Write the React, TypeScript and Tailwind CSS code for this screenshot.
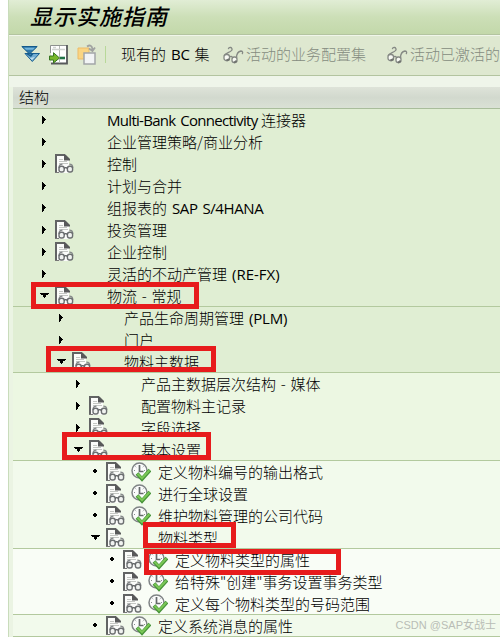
import type { ReactNode } from 'react';
import clsx from 'clsx';

type Row = {
  level: number;
  label: ReactNode;
  marker: 'closed' | 'open' | 'leaf';
  doc?: boolean;
  run?: boolean;
  line?: boolean;
  box?: string;
};

const L = ({ children, className = '' }: { children: string; className?: string }) => (
  <span className={clsx("inline-block [font-family:'Open_Sans','Noto_Sans',sans-serif] text-[15px] leading-[20px] font-normal", className)}>{children}</span>
);

const rows: Row[] = [
  { level: 0, marker: 'closed', label: <><L className="w-[154px] tracking-[-0.7px]">Multi-Bank Connectivity</L>连接器</> },
  { level: 0, marker: 'closed', label: '企业管理策略/商业分析' },
  { level: 0, marker: 'closed', label: '控制', doc: true },
  { level: 0, marker: 'closed', label: '计划与合并' },
  { level: 0, marker: 'closed', label: <>组报表的<L className="ml-[5px] tracking-[-0.4px]">SAP S/4HANA</L></> },
  { level: 0, marker: 'closed', label: '投资管理', doc: true },
  { level: 0, marker: 'closed', label: '企业控制', doc: true },
  { level: 0, marker: 'closed', label: <>灵活的不动产管理<L className="ml-[5px]">(RE-FX)</L></> },
  { level: 0, marker: 'open', label: '物流 - 常规', doc: true, line: true, box: 'left-[18px] top-[-3px] w-[168px] h-[27px]' },
  { level: 1, marker: 'closed', label: <>产品生命周期管理<L className="ml-[5px] tracking-[-0.2px]">(PLM)</L></> },
  { level: 1, marker: 'closed', label: '门户' },
  { level: 1, marker: 'open', label: '物料主数据', doc: true, line: true, box: 'left-[33px] top-[-5px] w-[170px] h-[26px]' },
  { level: 2, marker: 'closed', label: '产品主数据层次结构 - 媒体' },
  { level: 2, marker: 'closed', label: '配置物料主记录', doc: true },
  { level: 2, marker: 'closed', label: '字段选择', doc: true },
  { level: 2, marker: 'open', label: '基本设置', doc: true, line: true, box: 'left-[49px] top-[-7px] w-[149px] h-[28px]' },
  { level: 3, marker: 'leaf', label: '定义物料编号的输出格式', doc: true, run: true },
  { level: 3, marker: 'leaf', label: '进行全球设置', doc: true, run: true },
  { level: 3, marker: 'leaf', label: '维护物料管理的公司代码', doc: true, run: true },
  { level: 3, marker: 'open', label: '物料类型', doc: true, line: true, box: 'left-[130px] top-[-5px] w-[93px] h-[26px]' },
  { level: 4, marker: 'leaf', label: '定义物料类型的属性', doc: true, run: true, box: 'left-[131px] top-0 w-[197px] h-[26px]' },
  { level: 4, marker: 'leaf', label: '给特殊"创建"事务设置事务类型', doc: true, run: true },
  { level: 4, marker: 'leaf', label: '定义每个物料类型的号码范围', doc: true, run: true, line: true },
  { level: 3, marker: 'leaf', label: '定义系统消息的属性', doc: true, run: true, line: true },
];

const indent = ['pl-[29px]', 'pl-[46px]', 'pl-[63px]', 'pl-[80px]', 'pl-[97px]'];
const shade = ['bg-[#e0eed3]', 'bg-[#e0eed3]', 'bg-[#ecf7e2]', 'bg-[#f2faec]', 'bg-[#f9fdf6]'];

function Marker({ kind }: { kind: Row['marker'] }) {
  return (
    <svg width="9" height="22" viewBox="0 0 9 22" shapeRendering="crispEdges" className="overflow-visible">
      {kind === 'closed' && <path d="M0 7h1v8h-1zM1 8h1v6h-1zM2 9h1v3h-1zM3 10h1v1h-1z" />}
      {kind === 'open' && <path d="M-2 8h9v1h-9zM-1 9h7v1h-7zM1 10h3v2h-3zM2 12h1v1h-1z" />}
      {kind === 'leaf' && <path d="M1 8h2v1h1v2h-1v1h-2v-1h-1v-2h1z" />}
    </svg>
  );
}

function DocIcon() {
  return (
    <svg width="19" height="20" viewBox="0 0 19 20" fill="none">
      <path d="M1 1h9l4 4v14H1z" fill="#fbfcfa" />
      <path d="M1 19V1h9" stroke="#626464" strokeWidth="2" />
      <path d="M9 .5h1.5L15 5v1.5H9z" fill="#58595a" />
      <path d="M4 5.5h4M4 7.5h8M4 9.5h9" stroke="#c4c7c3" />
      <path d="M0 18.5h4" stroke="#777" />
      <path d="M4 14c0-3 1-3.8 3.5-3.8M17.8 14c0-3-1-3.8-3.5-3.8" stroke="#85888a" strokeWidth="1.3" />
      <rect x="4" y="12.2" width="5.2" height="5.8" rx="2.2" fill="#f1f3f1" stroke="#6c6f71" strokeWidth="1.4" />
      <rect x="12.4" y="12.2" width="5.2" height="5.8" rx="2.2" fill="#f1f3f1" stroke="#6c6f71" strokeWidth="1.4" />
      <path d="M9 14.5c1-1 2.5-1 3.5 0" stroke="#5d6062" strokeWidth="1.4" />
    </svg>
  );
}

function RunIcon() {
  return (
    <svg width="20" height="20" viewBox="0 0 20 20" fill="none">
      <circle cx="8.5" cy="8.5" r="7.5" fill="#fbfcfc" stroke="#808486" strokeWidth="1.5" />
      <path d="M8.5 3v6.5h4" stroke="#65696b" strokeWidth="1.7" />
      <path d="M3 8.5h1M8.5 14v1M13 8.5h1M4.5 4.5l.7.7M12.5 4.5l-.7.7" stroke="#8a8e90" />
      <path d="M6 11.5l5 5.5 8-9" stroke="#459238" strokeWidth="3.8" />
      <path d="M6.4 11.8l4.6 4.5 7.4-8" stroke="#7ac756" strokeWidth="2" />
    </svg>
  );
}

function ExpandIcon() {
  return (
    <svg width="20" height="20" viewBox="0 0 20 20">
      <path d="M.8 1.5h15.4L8.5 9z" fill="#2f78aa" stroke="#14598b" />
      <path d="M3 2.8h11L12 4.8H5z" fill="#73b5dc" />
      <path d="M4 8.5h14.5L11.3 16.5z" fill="#72add3" stroke="#175d8f" />
      <path d="M3.5 8l4 .2 1.5 1.5 2-1.5h2L10 12z" fill="#175d8f" />
      <path d="M6 10.5l5 4.5 3-3-5 1z" fill="#c0dfef" />
    </svg>
  );
}

function InsertIcon() {
  return (
    <svg width="20" height="21" viewBox="0 0 20 21" fill="none">
      <path d="M2 1h16v19H2z" fill="#fff" />
      <path d="M1.5 9V1.5H18" stroke="#8d918f" />
      <path d="M18 1v18.5H2" stroke="#57595b" strokeWidth="1.8" />
      <path d="M10.5 2v17" stroke="#b5b9b5" />
      <path d="M3 5.5h13M4 3.5h3" stroke="#d0d4d0" strokeWidth="1.6" />
      <path d="M11 14h5" stroke="#227448" strokeWidth="2.6" />
      <path d="M.5 12h4V8.7l6 5.3-6 5V16h-4z" fill="#78b72b" stroke="#377620" />
    </svg>
  );
}

function CopyIcon() {
  return (
    <svg width="20" height="21" viewBox="0 0 20 21" fill="none">
      <path d="M1 4h11v11H1z" fill="#fad582" stroke="#edbb69" />
      <path d="M7 9h11v11H7z" fill="#f2f4f5" stroke="#a3a5a8" strokeWidth="1.5" />
      <path d="M10 2.5c3-2 5-1 5.5 3M12 4.5l3.5 2.5 2.5-3.5" stroke="#a0a2a1" strokeWidth="1.8" />
    </svg>
  );
}

function Glasses() {
  return (
    <svg width="21" height="18" viewBox="0 0 21 18" fill="none" stroke="#858984" strokeWidth="1.3">
      <path d="M1.2 10C2 6.5 7 7 9 4 9.5 1 6 .6 5.3 3.2M13.5 12C13.5 8 15 5.5 18 5c2 0 2 2 1 3" />
      <rect x="1" y="8.5" width="5.5" height="6" rx="2.3" fill="#f8faf4" />
      <rect x="9" y="11" width="5" height="5.5" rx="2.2" fill="#f8faf4" />
      <path d="M6.5 11c1-1 2.5-1 3.5 1" />
      <path d="M3.5 14.5l3-1.3M11 16.8l2.7-2" stroke="#70746f" strokeWidth="2" />
    </svg>
  );
}

function TreeRow({ row }: { row: Row }) {
  return (
    <div
      className={clsx(
        'relative flex h-[22px] items-start',
        indent[row.level],
        shade[row.level],
        row.line && 'border-b border-[#b3c99e]'
      )}
    >
      <div className="w-[13px] shrink-0"><Marker kind={row.marker} /></div>
      <div className="flex w-[52px] shrink-0 gap-[6px] pt-px">
        {row.doc && <DocIcon />}
        {row.run && <RunIcon />}
      </div>
      <span className="whitespace-pre leading-[21px] [word-spacing:1.4px]">{row.label}</span>
      {row.box && <div className={clsx('absolute z-10 border-[5px] border-[#e71b1c]', row.box)} />}
    </div>
  );
}

export default function App() {
  return (
    <div className="relative h-[637px] w-[500px] overflow-hidden bg-white pl-[8px] [font-family:'Noto_Sans_CJK_SC',sans-serif] text-[15px] font-light text-black">
      <div className="h-full border-l border-[#c9dcbb] bg-[#ebf4e3]">
        <header className="h-[35px] border-b border-[#b3c4a0] bg-linear-to-b from-[#e1edd5] via-[#ccdfb7] to-[#c3d8aa] pl-[21px]">
          <h1 className="text-[22px] leading-[30px] font-medium tracking-[1px] italic">显示实施指南</h1>
        </header>
        <div className="flex h-[41px] items-center overflow-hidden border-t border-b border-t-[#f0f6ea] border-b-[#b3c4a0] bg-[#dee8d0] pb-[2px] whitespace-nowrap">
          <div className="ml-[12px] flex shrink-0 items-center gap-[8px]">
            <ExpandIcon />
            <InsertIcon />
            <CopyIcon />
          </div>
          <div className="ml-[8px] h-[17px] w-px shrink-0 bg-[#b8d899]" />
          <span className="ml-[15px] w-[102px] shrink-0">现有的<L className="mr-[5px] ml-[5px] tracking-[-0.3px]">BC</L>集</span>
          <span className="shrink-0"><Glasses /></span>
          <span className="ml-[2px] w-[141px] shrink-0 text-[#858c80]">活动的业务配置集</span>
          <span className="shrink-0"><Glasses /></span>
          <span className="ml-[2px] shrink-0 text-[#858c80]">活动已激活的</span>
        </div>
        <div className="h-[11px] bg-[#eff5ea]" />
        <div className="ml-[4px]">
          <div className="h-[22px] border-b border-[#a9bd9b] bg-linear-to-b from-[#dee3d9] via-[#d2d9ce] to-[#dae1d5] pl-[6px] leading-[19px]">结构</div>
          {rows.map((row, i) => (
            <TreeRow key={i} row={row} />
          ))}
        </div>
      </div>
      <div className="absolute right-[4px] bottom-[3px] [font-family:'Liberation_Sans','Noto_Sans_CJK_SC',sans-serif] text-[11px] leading-[18px] font-normal whitespace-nowrap text-[#b9bdb6]">CSDN @SAP女战士</div>
    </div>
  );
}
